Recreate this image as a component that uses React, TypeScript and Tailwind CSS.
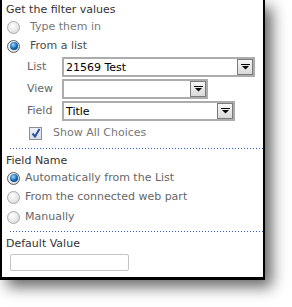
import React from "react";

function Radio({ checked }: { checked?: boolean }) {
  if (checked) {
    return (
      <span className="flex h-[13px] w-[13px] shrink-0 items-center justify-center rounded-full border border-[#5f5f5f] bg-[radial-gradient(circle_at_40%_35%,#ffffff,#cfcfcf)]">
        <span className="h-[8px] w-[8px] rounded-full bg-[radial-gradient(circle_at_40%_35%,#9ad8ff,#0b63b0_55%,#043565)]" />
      </span>
    );
  }
  return (
    <span className="h-[13px] w-[13px] shrink-0 rounded-full border border-[#a9a9a9] bg-[radial-gradient(circle_at_40%_35%,#ffffff,#d4d4d4)]" />
  );
}

function Arrow() {
  return (
    <svg width="9" height="6" viewBox="0 0 9 6">
      <rect x="0" y="0" width="9" height="1" fill="#000" />
      <polygon points="1,2 8,2 4.5,5.5" fill="#000" />
    </svg>
  );
}

function Select({ width, text }: { width: string; text?: string }) {
  return (
    <div className={`flex h-[20px] items-center justify-between border-2 border-[#acacac] bg-white pl-[2px] ${width}`}>
      <span className="text-[11px] leading-none text-black">{text}</span>
      <span className="flex h-[16px] w-[16px] items-center justify-center border border-[#7b7b7b] bg-[linear-gradient(to_bottom,#f7f7f7,#d9d9d9)]">
        <Arrow />
      </span>
    </div>
  );
}

function Dotted() {
  return (
    <div className="ml-[8px] h-[1px] bg-[linear-gradient(to_right,#2f5cc8_1px,transparent_1px)] bg-[length:3px_1px]" />
  );
}

export default function App() {
  return (
    <div className="h-[307px] w-[292px] bg-white font-['DejaVu_Sans',sans-serif]">
      <div className="h-[280px] w-[265px] border-b-[3px] border-l-2 border-r-2 border-black bg-white shadow-[7px_7px_14px_rgba(0,0,0,0.6)]">
        <div className="flex flex-col">
          <div className="flex h-[17px] items-center pl-[4px] pt-[3px] text-[11px] text-[#333]">Get the filter values</div>
          <div className="flex h-[19px] items-center pl-[5px] pt-[1px] text-[11px] text-[#777]">
            <Radio />
            <span className="ml-[10px]">Type them in</span>
          </div>
          <div className="flex h-[20px] items-center pl-[5px] text-[11px] text-[#4a4a4a]">
            <Radio checked />
            <span className="ml-[10px]">From a list</span>
          </div>
          <div className="mt-[1px] flex h-[20px] items-center text-[11px] text-[#666]">
            <span className="w-[60px] pl-[25px]">List</span>
            <Select width="w-[193px]" text="21569 Test" />
          </div>
          <div className="mt-[2px] flex h-[20px] items-center text-[11px] text-[#666]">
            <span className="w-[60px] pl-[25px]">View</span>
            <Select width="w-[146px]" />
          </div>
          <div className="mt-[2px] flex h-[20px] items-center text-[11px] text-[#666]">
            <span className="w-[60px] pl-[25px]">Field</span>
            <Select width="w-[173px]" text="Title" />
          </div>
          <div className="mt-[4px] flex h-[16px] items-center pl-[27px] text-[11px] text-[#777]">
            <span className="flex h-[13px] w-[13px] items-center justify-center border border-[#8f8f8f] bg-[linear-gradient(to_bottom,#eef2f8,#d5dde9)]">
              <svg width="10" height="10" viewBox="0 0 10 10">
                <path d="M1.5 5.5 L4 8.5 L8.5 1" stroke="#2c4f9e" strokeWidth="2" fill="none" />
              </svg>
            </span>
            <span className="ml-[11px]">Show All Choices</span>
          </div>
          <div className="mt-[7px]">
            <Dotted />
          </div>
          <div className="mt-[5px] flex h-[14px] items-center pl-[4px] text-[11px] text-[#333]">Field Name</div>
          <div className="flex h-[20px] items-center pl-[5px] text-[11px] text-[#666]">
            <Radio checked />
            <span className="ml-[5px]">Automatically from the List</span>
          </div>
          <div className="flex h-[19px] items-center pl-[5px] text-[11px] text-[#666]">
            <Radio />
            <span className="ml-[5px]">From the connected web part</span>
          </div>
          <div className="flex h-[20px] items-center pl-[5px] text-[11px] text-[#666]">
            <Radio />
            <span className="ml-[5px]">Manually</span>
          </div>
          <div className="mt-[4px]">
            <Dotted />
          </div>
          <div className="mt-[5px] flex h-[14px] items-center pl-[4px] text-[11px] text-[#333]">Default Value</div>
          <div className="mt-[3px] pl-[8px]">
            <div className="h-[17px] w-[119px] rounded-[2px] border border-[#c4c4c4] bg-white" />
          </div>
        </div>
      </div>
    </div>
  );
}
